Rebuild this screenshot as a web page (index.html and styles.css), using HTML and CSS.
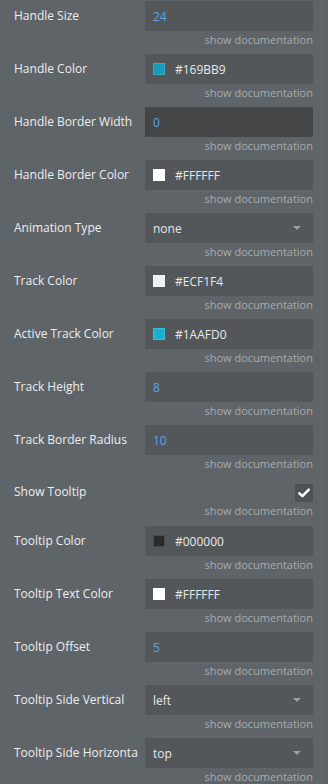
FILE: index.html
```html
<!DOCTYPE html>
<html>
<head>
<meta charset="utf-8">
<link rel="stylesheet" href="styles.css">
</head>
<body>
<div class="panel">
  <div class="row">
    <div class="line"><div class="label">Handle Size</div><div class="field num">24</div></div>
    <div class="doc">show documentation</div>
  </div>
  <div class="row">
    <div class="line"><div class="label">Handle Color</div><div class="field color"><span class="sw" style="background:#169BB9"></span>#169BB9</div></div>
    <div class="doc">show documentation</div>
  </div>
  <div class="row">
    <div class="line"><div class="label">Handle Border Width</div><div class="field num focus">0</div></div>
    <div class="doc">show documentation</div>
  </div>
  <div class="row">
    <div class="line"><div class="label">Handle Border Color</div><div class="field color"><span class="sw" style="background:#FFFFFF"></span>#FFFFFF</div></div>
    <div class="doc">show documentation</div>
  </div>
  <div class="row">
    <div class="line"><div class="label">Animation Type</div><div class="field select">none<span class="caret"></span></div></div>
    <div class="doc">show documentation</div>
  </div>
  <div class="row">
    <div class="line"><div class="label">Track Color</div><div class="field color"><span class="sw" style="background:#ECF1F4"></span>#ECF1F4</div></div>
    <div class="doc">show documentation</div>
  </div>
  <div class="row">
    <div class="line"><div class="label">Active Track Color</div><div class="field color"><span class="sw" style="background:#1AAFD0"></span>#1AAFD0</div></div>
    <div class="doc">show documentation</div>
  </div>
  <div class="row">
    <div class="line"><div class="label">Track Height</div><div class="field num">8</div></div>
    <div class="doc">show documentation</div>
  </div>
  <div class="row">
    <div class="line"><div class="label">Track Border Radius</div><div class="field num">10</div></div>
    <div class="doc">show documentation</div>
  </div>
  <div class="row row-check">
    <div class="line check-line"><div class="label">Show Tooltip</div>
      <div class="checkbox"><svg width="12" height="10" viewBox="0 0 12 10"><path d="M1.2 5.2 L4.4 8.2 L10.8 1.6" fill="none" stroke="#fff" stroke-width="2.4" stroke-linecap="round" stroke-linejoin="round"/></svg></div>
    </div>
    <div class="doc">show documentation</div>
  </div>
  <div class="row">
    <div class="line"><div class="label">Tooltip Color</div><div class="field color"><span class="sw" style="background:#2b2b2b"></span>#000000</div></div>
    <div class="doc">show documentation</div>
  </div>
  <div class="row">
    <div class="line"><div class="label">Tooltip Text Color</div><div class="field color"><span class="sw" style="background:#FFFFFF"></span>#FFFFFF</div></div>
    <div class="doc">show documentation</div>
  </div>
  <div class="row">
    <div class="line"><div class="label">Tooltip Offset</div><div class="field num">5</div></div>
    <div class="doc">show documentation</div>
  </div>
  <div class="row">
    <div class="line"><div class="label">Tooltip Side Vertical</div><div class="field select">left<span class="caret"></span></div></div>
    <div class="doc">show documentation</div>
  </div>
  <div class="row">
    <div class="line"><div class="label">Tooltip Side Horizontal</div><div class="field select">top<span class="caret"></span></div></div>
    <div class="doc">show documentation</div>
  </div>
</div>
</body>
</html>
```
FILE: styles.css
```css
html, body {
  margin: 0;
  padding: 0;
  background: #5f6468;
  height: 100%;
  overflow: hidden;
}
body {
  font-family: "Open Sans", "Liberation Sans", sans-serif;
  border-right: 1px solid #666b6f;
  width: 321px;
  height: 784px;
}
.panel {
  padding: 1px 0 0 14px;
  width: 299px;
}
.row {
  display: flex;
  flex-direction: column;
  height: 53px;
}
.line {
  display: flex;
  align-items: center;
  height: 30px;
}
.label {
  width: 124px;
  margin-right: 7px;
  padding-bottom: 2px;
  flex: none;
  color: #eceeef;
  font-size: 12px;
  white-space: nowrap;
  overflow: hidden;
}
.field {
  flex: 1;
  height: 30px;
  background: #535759;
  display: flex;
  align-items: center;
  padding: 0 8px;
  font-size: 12px;
  color: #e6e8e9;
  box-sizing: border-box;
}
.num { color: #5aa3e8; }
.focus { background: #444546; }
.sw {
  width: 12px;
  height: 12px;
  margin-right: 10px;
  flex: none;
  box-sizing: border-box;
  border: 1px solid rgba(255,255,255,0.15);
}
.select { justify-content: space-between; }
.caret {
  width: 0;
  height: 0;
  border-left: 4px solid transparent;
  border-right: 4px solid transparent;
  border-top: 4px solid #9a9ea1;
  margin-right: 4px;
}
.doc {
  text-align: right;
  font-size: 11px;
  color: #a7abae;
  line-height: 18px;
}
.row-check {
  height: 48px;
}
.check-line {
  height: 24px;
  align-items: flex-end;
  justify-content: space-between;
}
.check-line .label { align-self: center; padding-top: 3px; padding-bottom: 0; }
.checkbox {
  width: 18px;
  height: 18px;
  background: #4e5255;
  display: flex;
  align-items: center;
  justify-content: center;
}
```
